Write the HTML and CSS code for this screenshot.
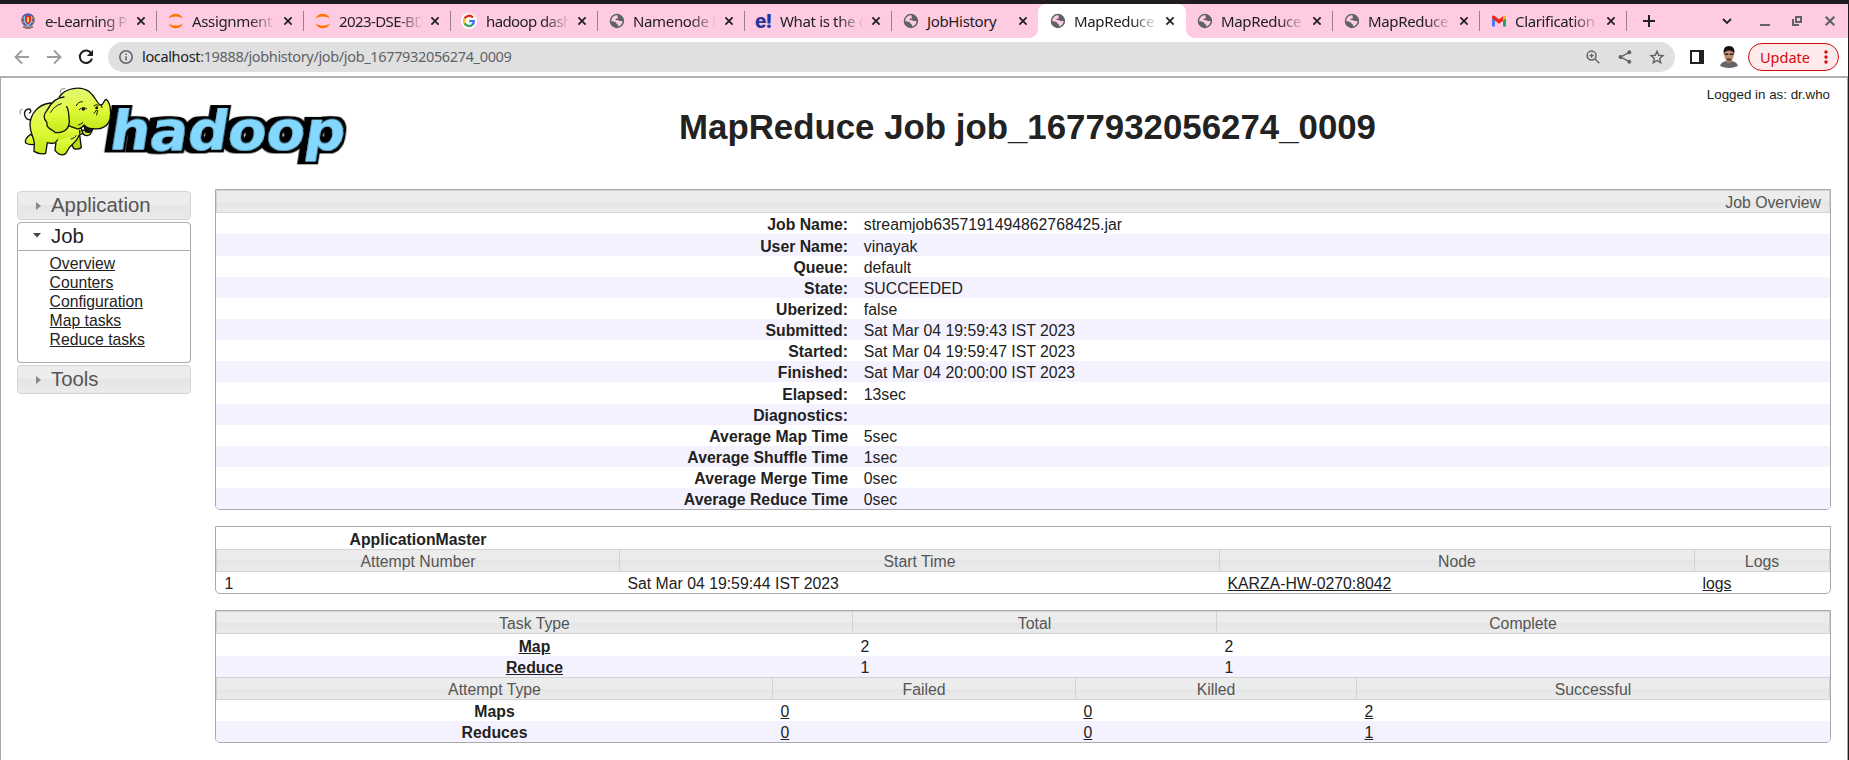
FILE: index.html
```html
<!DOCTYPE html>
<html lang="en">
<head>
<meta charset="utf-8">
<title>MapReduce Job job_1677932056274_0009</title>
<link rel="stylesheet" href="styles.css">
</head>
<body>
<svg class="defs" width="0" height="0">
  <symbol id="globe" viewBox="-.9 0 16 16">
    <circle cx="8" cy="8" r="7.2" fill="#5f6368"/>
    <path class="land" d="M8.6 2.2C8 3.4 9.600 3.800 9 4.900 8.500 5.700 7 5.300 6.700 6.300c-.2.800.7.900 1.600.8 1.200-.1 1.600.9 2.500 1 .9.100 1.600-.4 2.900-.1-.1 3-2.200 5-4.500 5.500.2-1.300-.1-1.900-1-2.400-.9-.4-1.100-1.300-1.800-2C5.500 8.200 4 8.600 2.300 8.200 2.300 4.800 5 2 8.600 2.200z"/>
  </symbol>
  <symbol id="close" viewBox="0 0 10 10">
    <path d="M1.400 1.400l7.200 7.200M8.600 1.400L1.400 8.600" fill="none" stroke="currentColor" stroke-width="1.800"/>
  </symbol>
  <symbol id="jupyter" viewBox="-.7 0 16 16">
    <path d="M.8 5.600C2 2.600 4.800.700 8 .700s6 1.900 7.200 4.900C13.300 4.200 10.800 3.500 8 3.500S2.700 4.200.8 5.600zM.8 10.400C2 13.400 4.800 15.300 8 15.300s6-1.900 7.200-4.900C13.300 11.800 10.800 12.500 8 12.500S2.700 11.800.8 10.400z" fill="#ff7400"/>
  </symbol>
</svg>

<div class="window">
  <header class="tabstrip">
    <div class="tab">
      <svg class="fav" viewBox="0 0 16 16"><circle cx="8" cy="7" r="6.800" fill="#5f5ba3"/><path d="M1 5h14M2 9h12" stroke="#b9903f" stroke-width="1.500"/><path d="M4 3h8v6l-4 5-4-5z" fill="#7fc5e8"/><path d="M5 3h6v5l-3 4-3-4z" fill="#e3262b"/><path d="M7 4h2v5H7z" fill="#ffd34a"/><path d="M3 13.500q5 3 10 0" stroke="#8b6e58" stroke-width="2" fill="none"/></svg>
      <span class="title snug">e-Learning P</span><svg class="x"><use href="#close"/></svg>
    </div>
    <div class="tab"><svg class="fav"><use href="#jupyter"/></svg><span class="title">Assignment</span><svg class="x"><use href="#close"/></svg></div>
    <div class="tab"><svg class="fav"><use href="#jupyter"/></svg><span class="title snug">2023-DSE-BD</span><svg class="x"><use href="#close"/></svg></div>
    <div class="tab">
      <svg class="fav" viewBox="0 0 16 16"><circle cx="8" cy="8" r="8" fill="#fff"/><g fill="none" stroke-width="2.300"><path d="M11.900 4.500A5 5 0 0 0 3.600 5.600" stroke="#ea2a1f"/><path d="M3.600 5.600a5 5 0 0 0 0 4.800" stroke="#fbbc05"/><path d="M3.600 10.400a5 5 0 0 0 7.700 1.400" stroke="#34a853"/><path d="M11.300 11.800A5 5 0 0 0 12.900 8.200H8.200" stroke="#4274f3"/></g></svg>
      <span class="title snug">hadoop dash</span><svg class="x"><use href="#close"/></svg>
    </div>
    <div class="tab"><svg class="fav"><use href="#globe"/></svg><span class="title">Namenode i</span><svg class="x"><use href="#close"/></svg></div>
    <div class="tab"><span class="fav edu">e!</span><span class="title">What is the c</span><svg class="x"><use href="#close"/></svg></div>
    <div class="tab nosep"><svg class="fav"><use href="#globe"/></svg><span class="title full">JobHistory</span><svg class="x"><use href="#close"/></svg></div>
    <div class="tab nosep active"><svg class="fav"><use href="#globe"/></svg><span class="title">MapReduce</span><svg class="x"><use href="#close"/></svg></div>
    <div class="tab"><svg class="fav"><use href="#globe"/></svg><span class="title">MapReduce</span><svg class="x"><use href="#close"/></svg></div>
    <div class="tab"><svg class="fav"><use href="#globe"/></svg><span class="title">MapReduce</span><svg class="x"><use href="#close"/></svg></div>
    <div class="tab">
      <svg class="fav" viewBox="-1 0 16 16"><path d="M1 5v8.500h3V7z" fill="#4b7bf5"/><path d="M12 7v6.500h3V5z" fill="#23a455"/><path d="M12 3.800V7.500l3-2.300V4c0-1.600-1.700-2-3-.2z" fill="#fbbc04"/><path d="M1 4c0-1.600 1.700-2 3-.8l4 3 4-3v4.600l-4 3-4-3L1 5.500z" fill="#ea2a1f"/></svg>
      <span class="title">Clarification</span><svg class="x"><use href="#close"/></svg>
    </div>
    <svg class="newtab" viewBox="0 0 12 12"><path d="M6 0v12M0 6h12" stroke="#202124" stroke-width="2"/></svg>
    <div class="wincontrols">
      <svg width="10" height="7" viewBox="0 0 10 7"><path d="M1 1l4 4 4-4" fill="none" stroke="#202124" stroke-width="1.800"/></svg>
      <svg width="10" height="12" viewBox="0 0 10 12"><path d="M0 10h10" stroke="#5f6368" stroke-width="2"/></svg>
      <svg width="10" height="10" viewBox="0 0 10 10"><path d="M4 1h5v5H4zM1 3v6h6" fill="none" stroke="#5f6368" stroke-width="2"/></svg>
      <svg class="wx" width="12" height="12"><use href="#close"/></svg>
    </div>
  </header>

  <nav class="toolbar">
    <svg class="nav" viewBox="0 0 16 16"><path d="M15 8H2M8 1.500L1.500 8 8 14.500" fill="none" stroke="#9d9d9d" stroke-width="1.800"/></svg>
    <svg class="nav" viewBox="0 0 16 16"><path d="M1 8h13M8 1.500L14.500 8 8 14.500" fill="none" stroke="#9d9d9d" stroke-width="1.800"/></svg>
    <svg class="nav" viewBox="0 0 16 16"><path d="M13.300 4.500A6.200 6.200 0 1 0 14 9.500" fill="none" stroke="#202124" stroke-width="2"/><path d="M15 .800V7H8.800z" fill="#202124"/></svg>
    <div class="omnibox">
      <svg class="info" viewBox="0 0 14 14"><circle cx="7" cy="7" r="6.200" fill="none" stroke="#5f6368" stroke-width="1.500"/><path d="M7 6.200v4.200M7 3.400v1.600" stroke="#5f6368" stroke-width="1.500"/></svg>
      <span class="url"><b>localhost</b>:19888/jobhistory/job/job_1677932056274_0009</span>
      <svg class="oi" viewBox="0 0 14 14"><circle cx="5.600" cy="5.600" r="4.500" fill="none" stroke="#5f6368" stroke-width="1.500"/><path d="M9 9l4.300 4.300M3.400 5.600h4.400M5.600 3.400v4.400" stroke="#5f6368" stroke-width="1.400"/></svg>
      <svg class="oi" viewBox="0 0 14 14"><path d="M11.300 2.300L2.500 7l8.800 4.700" fill="none" stroke="#5f6368" stroke-width="1.400"/><g fill="#5f6368"><circle cx="11.300" cy="2.300" r="2"/><circle cx="2.500" cy="7" r="2"/><circle cx="11.300" cy="11.700" r="2"/></g></svg>
      <svg class="oi" viewBox="0 0 14 14"><path d="M7 1.300l1.700 4 4.300.4-3.300 2.800 1 4.200L7 10.500l-3.700 2.200 1-4.200L1 5.700l4.300-.4z" fill="none" stroke="#5f6368" stroke-width="1.400"/></svg>
    </div>
    <svg class="panel" viewBox="0 0 14 14"><path d="M0 0h14v14H0zM2 2v10h7V2z" fill="#202124" fill-rule="evenodd"/></svg>
    <svg class="avatar" viewBox="0 0 18 22"><path d="M0 20q1-4 6-5h6q5 1 6 5-9 4-18 0z" fill="#62666d"/><path d="M6 12h6v4q-3 2.500-6 0z" fill="#a9775c"/><ellipse cx="9" cy="9" rx="4.800" ry="6.500" fill="#c08d70"/><path d="M3.800 8Q2.500 0 9 0t5.200 8Q13 4.500 9 4.500T3.800 8z" fill="#14110f"/><path d="M4.500 8.300h3.800M9.700 8.300h3.800" stroke="#2b211d" stroke-width="1.600"/><path d="M6 13q3-1.500 6 0-3 4-6 0z" fill="#5e4236"/></svg>
    <div class="update"><span>Update</span><svg width="4" height="14" viewBox="0 0 4 14" fill="#d50a0a"><circle cx="2" cy="2" r="1.700"/><circle cx="2" cy="7" r="1.700"/><circle cx="2" cy="12" r="1.700"/></svg></div>
  </nav>

  <main class="page">
    <div class="masthead">
      <svg class="logo" width="332" height="84" viewBox="0 0 332 84">
        <defs>
          <linearGradient id="skin" x1="0" y1="0" x2="0" y2="1"><stop offset="0" stop-color="#e2f578"/><stop offset=".5" stop-color="#e0fb3a"/><stop offset="1" stop-color="#c3e81a"/></linearGradient>
          <filter id="extrude" x="-5%" y="-20%" width="110%" height="140%">
            <feMorphology in="SourceAlpha" operator="dilate" radius="3 2.500" result="fat"/>
            <feOffset in="fat" dx="-5" dy="0" result="shade"/>
            <feMerge><feMergeNode in="shade"/><feMergeNode in="fat"/><feMergeNode in="SourceGraphic"/></feMerge>
          </filter>
        </defs>
        <g transform="translate(91 63.500) skewX(-9)" filter="url(#extrude)">
          <text textLength="235" lengthAdjust="spacingAndGlyphs" font-family="DejaVu Sans, sans-serif" font-weight="700" font-size="55" fill="#84d8ff">hadoop</text>
        </g>
        <g transform="translate(-17 -11) scale(.3333)">
          <g fill="url(#skin)" stroke="#11130a" stroke-width="4" stroke-linejoin="round" stroke-linecap="round">
            <path d="M94 134C74 136 68 112 80 104C92 98 97 110 88 114" fill="none"/>
            <path d="M92 178C80 186 74 196 77 204Q88 211 103 208L108 190z"/>
            <path d="M238 172L244 218Q232 226 221 220L210 200z" fill="#b5d91a"/>
            <path d="M152 84C115 88 91 115 90 150C90 175 103 190 103 205L102 229Q120 240 137 235L142 203Q156 207 172 202L250 175L215 95z"/>
            <path d="M168 200L165 226Q182 247 197 236Q206 216 222 203Q238 188 240 168L200 162z"/>
            <path d="M186 150L172 196L238 180L236 160L215 140z" stroke="none"/>
            <path d="M246 166Q248 182 262 182Q274 180 277 164z"/>
            <path d="M178 66C195 38 242 32 268 50C287 65 290 86 302 90C313 89 310 76 318 73C330 80 335 108 330 132C325 152 305 165 280 161Q262 164 250 152Q240 166 228 160L205 152L190 90z"/>
            <path d="M252 150Q262 162 279 161Q272 177 256 170z" fill="#17200a"/>
            <path d="M192 66C164 68 150 88 141 106C130 118 130 132 140 141L142 154C150 165 160 165 166 173C188 173 207 164 208 140C206 120 207 105 200 95"/>
          </g>
          <g fill="none" stroke="#11130a" stroke-width="3" stroke-linecap="round">
            <path d="M152 112Q163 92 184 86M229 92Q234 80 247 80M238 104Q248 94 260 101M282 92Q292 86 296 92M289 106L282 115M293 106L290 120M304 90L306 98M236 150Q242 148 248 143M213 192Q225 190 229 182"/>
          </g>
          <path d="M242 103Q248 93 257 101Q250 114 242 103z" fill="#fff"/>
          <g fill="#11130a"><circle cx="250" cy="102" r="5.500"/><circle cx="290" cy="98" r="4.500"/></g>
          <path d="M181 54L183 43L196 40M61 118L60 106L68 102" fill="none" stroke="#8b8b8b" stroke-width="3"/>
        </g>
      </svg>
      <h1>MapReduce Job job_1677932056274_0009</h1>
      <div class="user">Logged in as: dr.who</div>
    </div>

    <div class="columns">
      <aside class="side">
        <h3><svg viewBox="0 0 6 8"><path d="M0 0l5 4-5 4z" fill="#888"/></svg>Application</h3>
        <h3 class="open"><svg viewBox="0 0 8 5"><path d="M0 0h8L4 4.500z" fill="#454545"/></svg>Job</h3>
        <ul>
          <li><a>Overview</a></li><li><a>Counters</a></li><li><a>Configuration</a></li><li><a>Map tasks</a></li><li><a>Reduce tasks</a></li>
        </ul>
        <h3><svg viewBox="0 0 6 8"><path d="M0 0l5 4-5 4z" fill="#888"/></svg>Tools</h3>
      </aside>

      <div class="content">
        <section class="box overview">
          <div class="hd"><div class="last right">Job Overview</div></div>
          <dl>
            <div><dt>Job Name:</dt><dd>streamjob6357191494862768425.jar</dd></div>
            <div class="tall"><dt>User Name:</dt><dd>vinayak</dd></div>
            <div><dt>Queue:</dt><dd>default</dd></div>
            <div><dt>State:</dt><dd>SUCCEEDED</dd></div>
            <div><dt>Uberized:</dt><dd>false</dd></div>
            <div><dt>Submitted:</dt><dd>Sat Mar 04 19:59:43 IST 2023</dd></div>
            <div><dt>Started:</dt><dd>Sat Mar 04 19:59:47 IST 2023</dd></div>
            <div><dt>Finished:</dt><dd>Sat Mar 04 20:00:00 IST 2023</dd></div>
            <div class="tall"><dt>Elapsed:</dt><dd>13sec</dd></div>
            <div><dt>Diagnostics:</dt><dd></dd></div>
            <div><dt>Average Map Time</dt><dd>5sec</dd></div>
            <div><dt>Average Shuffle Time</dt><dd>1sec</dd></div>
            <div><dt>Average Merge Time</dt><dd>0sec</dd></div>
            <div><dt>Average Reduce Time</dt><dd>0sec</dd></div>
          </dl>
        </section>

        <section class="box master">
          <div class="row tall cap"><b>ApplicationMaster</b></div>
          <div class="hd"><div>Attempt Number</div><div>Start Time</div><div>Node</div><div>Logs</div></div>
          <div class="row"><span>1</span><span>Sat Mar 04 19:59:44 IST 2023</span><span><a>KARZA-HW-0270:8042</a></span><span><a>logs</a></span></div>
        </section>

        <section class="box">
          <div class="tasks">
            <div class="hd"><div>Task Type</div><div>Total</div><div>Complete</div></div>
            <div class="row tall"><b><a>Map</a></b><span>2</span><span>2</span></div>
            <div class="row odd"><b><a>Reduce</a></b><span>1</span><span>1</span></div>
          </div>
          <div class="attempts">
            <div class="hd"><div>Attempt Type</div><div>Failed</div><div>Killed</div><div>Successful</div></div>
            <div class="row"><b>Maps</b><span><a>0</a></span><span><a>0</a></span><span><a>2</a></span></div>
            <div class="row odd"><b>Reduces</b><span><a>0</a></span><span><a>0</a></span><span><a>1</a></span></div>
          </div>
        </section>
      </div>
    </div>
  </main>
</div>
</body>
</html>
```
FILE: styles.css
```css
* { box-sizing: border-box; }
body {
  margin: 0;
  background: #1f1c1f;
  font-family: "Liberation Sans", Arial, sans-serif;
  color: #222;
}
svg { display: block; flex: none; overflow: visible; }
.defs { position: absolute; }
.window {
  display: flex;
  flex-direction: column;
  height: 760px;
  padding-top: 4px;
  padding-right: 1px;
  overflow: hidden;
}

/* tab strip */
.tabstrip {
  display: flex;
  align-items: center;
  height: 34px;
  padding-left: 10px;
  background: #ffcbe2;
  color: #202124;
  font: 15px/20px "Noto Sans", "Open Sans", sans-serif;
}
.tab {
  display: flex;
  align-items: center;
  flex: none;
  position: relative;
  width: 147px;
  height: 34px;
  padding-left: 10px;
}
.tab::after {
  content: "";
  position: absolute;
  right: 0;
  top: 7px;
  width: 1px;
  height: 20px;
  background: #97808c;
}
.tab.nosep::after { display: none; }
.tab.active { background: #fff; border-radius: 8px 8px 0 0; left: -1px; width: 148px; margin-right: -1px; padding-left: 11px; }
.tab.active::before {
  content: "";
  position: absolute;
  left: -8px;
  right: -8px;
  bottom: 0;
  height: 8px;
  background:
    radial-gradient(circle at 0 0, transparent 7.5px, #fff 8px) left / 8px 8px no-repeat,
    radial-gradient(circle at 100% 0, transparent 7.5px, #fff 8px) right / 8px 8px no-repeat;
}
.fav { width: 16px; height: 16px; margin-right: 9px; flex: none; }
.land { fill: #ffcbe2; }
.active .land { fill: #fff; }
.edu { font: 800 19px/18px Inter, sans-serif; color: #26349b; letter-spacing: -1px; }
.title {
  width: 84px;
  white-space: nowrap;
  letter-spacing: -.35px;
  -webkit-mask-image: linear-gradient(90deg, #000 58px, transparent 84px);
  mask-image: linear-gradient(90deg, #000 58px, transparent 84px);
}
.title.full { -webkit-mask-image: none; mask-image: none; }
.title.snug { letter-spacing: -.6px; }
.x { width: 10px; height: 10px; margin-left: 7px; }
.newtab { width: 12px; height: 12px; margin-left: 16px; }
.wincontrols { display: flex; align-items: center; gap: 22px; margin-left: auto; padding-right: 12px; color: #5f6368; }
.wincontrols svg:first-child { margin-right: 6px; }

/* toolbar */
.toolbar {
  display: flex;
  align-items: center;
  height: 38px;
  padding: 0 9px 0 14px;
  background: #fff;
  font-family: "Noto Sans", "Open Sans", sans-serif;
}
.nav { width: 16px; height: 16px; margin-right: 16px; }
.omnibox {
  display: flex;
  align-items: center;
  flex: none;
  width: 1567px;
  height: 30px;
  margin-left: -2px;
  padding: 0 11px;
  border-radius: 15px;
  background: #e0e0e0;
}
.info { width: 14px; height: 14px; margin-right: 9px; }
.url { margin: -2px auto 0 0; font-size: 14.5px; color: #5f6368; letter-spacing: -.35px; white-space: nowrap; }
.url b { font-weight: 400; color: #202124; }
.oi { width: 14px; height: 14px; margin-left: 18px; }
.panel { width: 14px; height: 14px; margin-left: 15px; }
.avatar { width: 18px; height: 22px; margin-left: 16px; }
.update {
  display: flex;
  align-items: center;
  justify-content: space-between;
  width: 91px;
  height: 28px;
  margin-left: auto;
  padding: 0 10px 0 11px;
  border: 1px solid #d50a0a;
  border-radius: 14px;
  background: #fdeaea;
  color: #d50a0a;
  font-size: 14.5px;
}
.update span { margin-top: -1px; }

/* page */
.page {
  flex: 1;
  border: solid #a9a9a9;
  border-width: 2px 1px 0 1px;
  border-top-color: #b0b0b0;
  background: #fff;
  font-size: 15.8px;
  line-height: 18px;
}
.masthead {
  display: grid;
  grid-template-columns: 332px 1fr 124px;
  height: 111px;
  padding: 8px 17px 0 16px;
}
h1 { margin: 21px 0 0; text-align: center; font-size: 34.85px; line-height: 40px; white-space: nowrap; }
.user { padding-top: 1px; text-align: right; font-size: 13.35px; line-height: 16px; white-space: nowrap; }
.columns { display: flex; align-items: flex-start; padding: 0 16px; }
.side { width: 174px; padding-top: 2px; margin-right: 24px; }
.side h3 {
  display: flex;
  align-items: center;
  height: 29px;
  margin: 0 0 2px;
  padding: 0 0 2px 18px;
  border: 1px solid #d3d3d3;
  border-radius: 4px;
  background: linear-gradient(#ececec 50%, #e5e5e5 50%, #ebebeb);
  color: #555;
  font-size: 20.35px;
  font-weight: 400;
}
.side h3 svg { width: 6px; height: 8px; margin: 2px 9px 0 0; }
.side h3.open { margin: 0; padding-left: 15px; border-color: #aaa; border-radius: 4px 4px 0 0; background: #fff; color: #212121; }
.side h3.open svg { width: 8px; height: 5px; margin: 0 10px 0 0; }
.side ul {
  height: 112px;
  margin: 0 0 2px;
  padding: 4px 0 0 31.6px;
  border: 1px solid #aaa;
  border-top: 0;
  border-radius: 0 0 4px 4px;
  list-style: none;
  font-size: 15.73px;
  line-height: 18.9px;
}
a { text-decoration: underline; }

/* data boxes */
.content { flex: 1; min-width: 0; }
.box { margin-bottom: 16px; border: 1px solid #aaa; border-radius: 0 0 5px 5px; overflow: hidden; }
.hd, .row { display: grid; }
.hd { height: 23px; }
.hd div {
  padding-top: 3px;
  border: solid #d3d3d3;
  border-width: 1px 0 1px 1px;
  background: linear-gradient(#ececec 50%, #e5e5e5 50%, #ebebeb);
  color: #555;
  text-align: center;
}
.hd div:last-child { border-right-width: 1px; }
.hd .right { padding-right: 8px; text-align: right; }
dl { margin: 0; }
dl div { display: grid; grid-template-columns: 632px 1fr; column-gap: 15.8px; }
dl div, .row { height: 21px; padding-top: 3px; }
dl div:nth-child(even), .odd { background: #f5f2ff; }
dl .tall, .row.tall { height: 22px; padding-top: 4px; }
dt { font-weight: 700; text-align: right; }
dd { margin: 0; }
.row span { padding-left: 8.5px; }
.row b { padding-left: 1px; text-align: center; }
.master > div { grid-template-columns: 403px 600px 475px 1fr; }
.tasks > div { grid-template-columns: 636px 364px 1fr; }
.attempts > div { grid-template-columns: 556px 303px 281px 1fr; }
```
